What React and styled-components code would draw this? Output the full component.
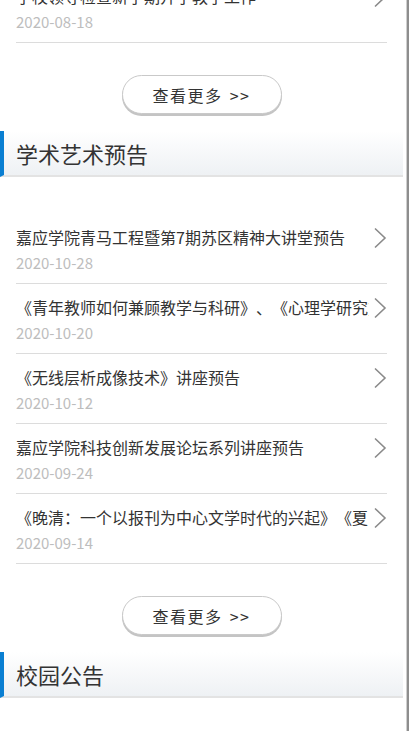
import React from 'react';
import styled, { createGlobalStyle } from 'styled-components';

const GlobalStyle = createGlobalStyle`
  html, body {
    margin: 0;
    padding: 0;
    background: #ffffff;
    overflow: hidden;
  }
  body {
    font-family: "Noto Sans CJK SC", "Noto Sans", sans-serif;
    color: #333333;
    text-spacing-trim: space-all;
  }
`;

const newsTail = [
  { title: '学校领导检查新学期开学教学工作', date: '2020-08-18' },
];

const artNotices = [
  { title: '嘉应学院青马工程暨第7期苏区精神大讲堂预告', date: '2020-10-28' },
  { title: '《青年教师如何兼顾教学与科研》、《心理学研究方法》讲座预告', date: '2020-10-20' },
  { title: '《无线层析成像技术》讲座预告', date: '2020-10-12' },
  { title: '嘉应学院科技创新发展论坛系列讲座预告', date: '2020-09-24' },
  { title: '《晚清：一个以报刊为中心文学时代的兴起》《夏目漱石》讲座预告', date: '2020-09-14' },
];

const Chevron = () => (
  <svg width="14" height="22" viewBox="0 0 14 22" fill="none">
    <path d="M2 1.5 L12 11 L2 20.5" stroke="#8a8a8a" strokeWidth="1.6" />
  </svg>
);

const NewsList = function ({ items, top }) {
  return (
    <StyledList top={top}>
      {items.map((item) => (
        <Item key={item.title + item.date}>
          <div className="text">
            <Title>{item.title}</Title>
            <DateText>{item.date}</DateText>
          </div>
          <div className="arrow">
            <Chevron />
          </div>
        </Item>
      ))}
    </StyledList>
  );
};

const App = function () {
  return (
    <Frame>
      <GlobalStyle />
      <Page>
        <NewsList items={newsTail} top={0} />
        <MoreArea>
          <MoreButton type="button">查看更多 &gt;&gt;</MoreButton>
        </MoreArea>

        <SectionHeader>学术艺术预告</SectionHeader>
        <NewsList items={artNotices} top={37} />
        <MoreArea>
          <MoreButton type="button">查看更多 &gt;&gt;</MoreButton>
        </MoreArea>

        <SectionHeader>校园公告</SectionHeader>
      </Page>
      <Edge />
    </Frame>
  );
};

export default App;

const Frame = styled.div`
  display: flex;
  width: 411px;
  height: 731px;
  overflow: hidden;
  align-items: flex-start;
`;

const Page = styled.main`
  width: 403px;
  flex-shrink: 0;
  margin-top: -27px;
`;

const Edge = styled.div`
  width: 3px;
  margin-left: 3px;
  align-self: stretch;
  border-left: 1px solid #cfcfcf;
  background: #8e8e8e;
  box-sizing: border-box;
`;

const StyledList = styled.ul`
  list-style: none;
  margin: ${(p) => p.top}px 0 0;
  padding: 0 16px;
`;

const Item = styled.li`
  height: 70px;
  box-sizing: border-box;
  border-bottom: 1px solid #dcdcdc;
  display: flex;
  align-items: flex-start;

  .text {
    flex: 1;
    min-width: 0;
    padding-top: 12px;
  }

  .arrow {
    width: 16px;
    flex-shrink: 0;
    display: flex;
    justify-content: flex-end;
    padding-top: 13px;
  }
`;

const Title = styled.div`
  font-size: 16px;
  line-height: 22px;
  color: #333333;
  white-space: nowrap;
  overflow: hidden;
  margin-right: 2px;
`;

const DateText = styled.div`
  font-size: 15px;
  line-height: 20px;
  margin-top: 5px;
  color: #bdbdbd;
`;

const MoreArea = styled.div`
  display: flex;
  justify-content: center;
  padding: 32px 0 17px;
`;

const MoreButton = styled.button`
  width: 160px;
  height: 39px;
  border-radius: 20px;
  border: 1px solid #c9c9c9;
  box-shadow: 0 2px 0 #c4c4c4;
  background: #ffffff;
  font-family: "Noto Sans CJK SC", "Noto Sans", sans-serif;
  font-size: 16px;
  letter-spacing: 1.5px;
  word-spacing: 2px;
  color: #333333;
  padding: 0;
`;

const SectionHeader = styled.h2`
  margin: 0;
  box-sizing: border-box;
  border-left: 4px solid #0a7fd2;
  border-bottom: 2px solid #e3e3e3;
  height: 46px;
  padding-left: 12px;
  display: flex;
  align-items: center;
  font-size: 22px;
  font-weight: normal;
  color: #333333;
  background: linear-gradient(to bottom, #ffffff 0%, #eef1f4 100%);
`;
